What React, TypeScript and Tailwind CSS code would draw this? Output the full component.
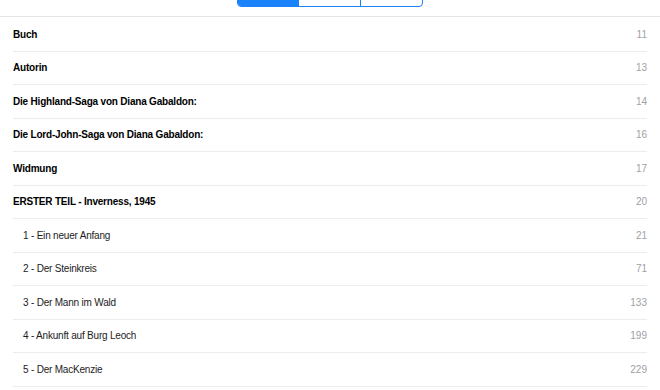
import React from "react";

const rows: { title: string; page: number; bold?: boolean; indent?: boolean }[] = [
  { title: "Buch", page: 11, bold: true },
  { title: "Autorin", page: 13, bold: true },
  { title: "Die Highland-Saga von Diana Gabaldon:", page: 14, bold: true },
  { title: "Die Lord-John-Saga von Diana Gabaldon:", page: 16, bold: true },
  { title: "Widmung", page: 17, bold: true },
  { title: "ERSTER TEIL - Inverness, 1945", page: 20, bold: true },
  { title: "1 - Ein neuer Anfang", page: 21, indent: true },
  { title: "2 - Der Steinkreis", page: 71, indent: true },
  { title: "3 - Der Mann im Wald", page: 133, indent: true },
  { title: "4 - Ankunft auf Burg Leoch", page: 199, indent: true },
  { title: "5 - Der MacKenzie", page: 229, indent: true },
  { title: "6 - David Beaton", page: 260, indent: true },
];

export default function App() {
  return (
    <div
      className="w-[660px] h-[390px] overflow-hidden bg-white"
      style={{ fontFamily: '"Liberation Sans", Arial, sans-serif' }}
    >
      <div className="h-[17px] relative border-b border-[#e4e4e6]">
        <div className="absolute left-[237px] top-[-17px] w-[186px] h-[24px] flex border border-[#1a82fb] rounded-[4px] overflow-hidden text-[11px] leading-none">
          <div className="flex-1 bg-[#1a82fb] text-white flex items-end justify-center pb-[5px]">Inhalt</div>
          <div className="flex-1 text-[#1a82fb] border-r border-[#1a82fb] flex items-end justify-center pb-[5px]">Lesezeichen</div>
          <div className="flex-1 text-[#1a82fb] flex items-end justify-center pb-[5px]">Notizen</div>
        </div>
      </div>
      <div className="pl-[13px] pr-[13px] pt-[1px]">
        {rows.map((r, i) => (
          <div
            key={i}
            className="h-[33.5px] flex items-center justify-between border-b border-[#ececee] text-[10px] tracking-[-0.2px]"
          >
            <span
              className={
                (r.bold ? "font-bold text-black " : "text-[#1c1c1c] ") + (r.indent ? "pl-[10px]" : "")
              }
            >
              {r.title}
            </span>
            <span className="text-[#a0a0a4] tracking-normal">{r.page}</span>
          </div>
        ))}
      </div>
    </div>
  );
}
